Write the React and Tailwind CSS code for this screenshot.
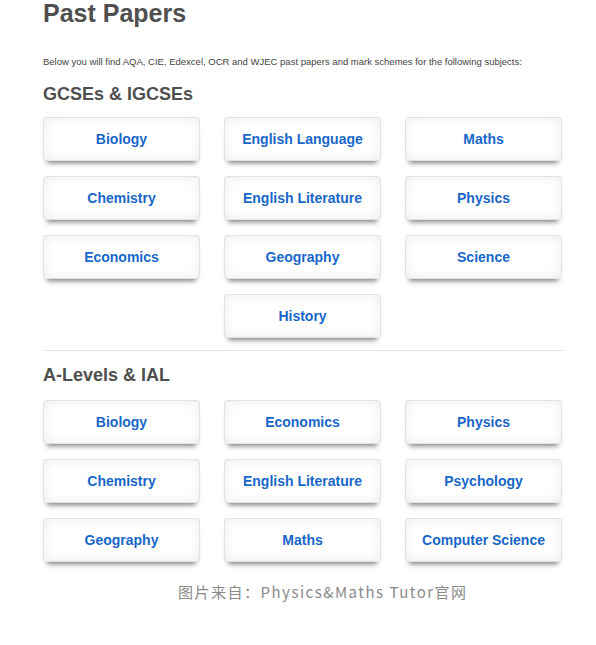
export default function App() {
  const gcse = [
    "Biology", "English Language", "Maths",
    "Chemistry", "English Literature", "Physics",
    "Economics", "Geography", "Science",
    null, "History", null,
  ];
  const alevel = [
    "Biology", "Economics", "Physics",
    "Chemistry", "English Literature", "Psychology",
    "Geography", "Maths", "Computer Science",
  ];
  const Box = ({ label }) =>
    label ? (
      <a className="flex h-[44px] items-center justify-center rounded-[3px] border border-[#e2e2e2] bg-white text-[14px] font-bold text-[#1867c8] shadow-[0_6px_5px_-4px_rgba(0,0,0,0.5),inset_0_0_12px_rgba(0,0,0,0.08)]">
        {label}
      </a>
    ) : (
      <div />
    );
  return (
    <div className="min-h-[645px] w-[596px] bg-white font-['Liberation_Sans',Arial,sans-serif]">
      <div className="ml-[43px] w-[522px]">
        <h1 className="text-[25px] font-bold leading-[26px] text-[#4f4f4f]">Past Papers</h1>
        <p className="mt-[29px] text-[9.5px] leading-[14px] text-[#444]">
          Below you will find AQA, CIE, Edexcel, OCR and WJEC past papers and mark schemes for the following subjects:
        </p>
        <h2 className="mt-[14px] text-[18px] font-bold leading-[22px] text-[#4f4f4f]">GCSEs &amp; IGCSEs</h2>
        <div className="mt-[12px] grid grid-cols-[157px_157px_157px] gap-x-[24px] gap-y-[15px]">
          {gcse.map((l, i) => (
            <Box key={i} label={l} />
          ))}
        </div>
        <div className="mt-[12px] border-t border-[#e6e6e6]" />
        <h2 className="mt-[13px] text-[18px] font-bold leading-[22px] text-[#4f4f4f]">A-Levels &amp; IAL</h2>
        <div className="mt-[14px] grid grid-cols-[157px_157px_157px] gap-x-[24px] gap-y-[15px]">
          {alevel.map((l, i) => (
            <Box key={i} label={l} />
          ))}
        </div>
      </div>
      <p className="mt-[20px] pl-[178px] font-['Noto_Sans_CJK_SC',sans-serif] text-[15px] leading-[20px] tracking-[1.5px] text-[#8a8a8a]">
        图片来自：Physics&amp;Maths Tutor官网
      </p>
    </div>
  );
}
